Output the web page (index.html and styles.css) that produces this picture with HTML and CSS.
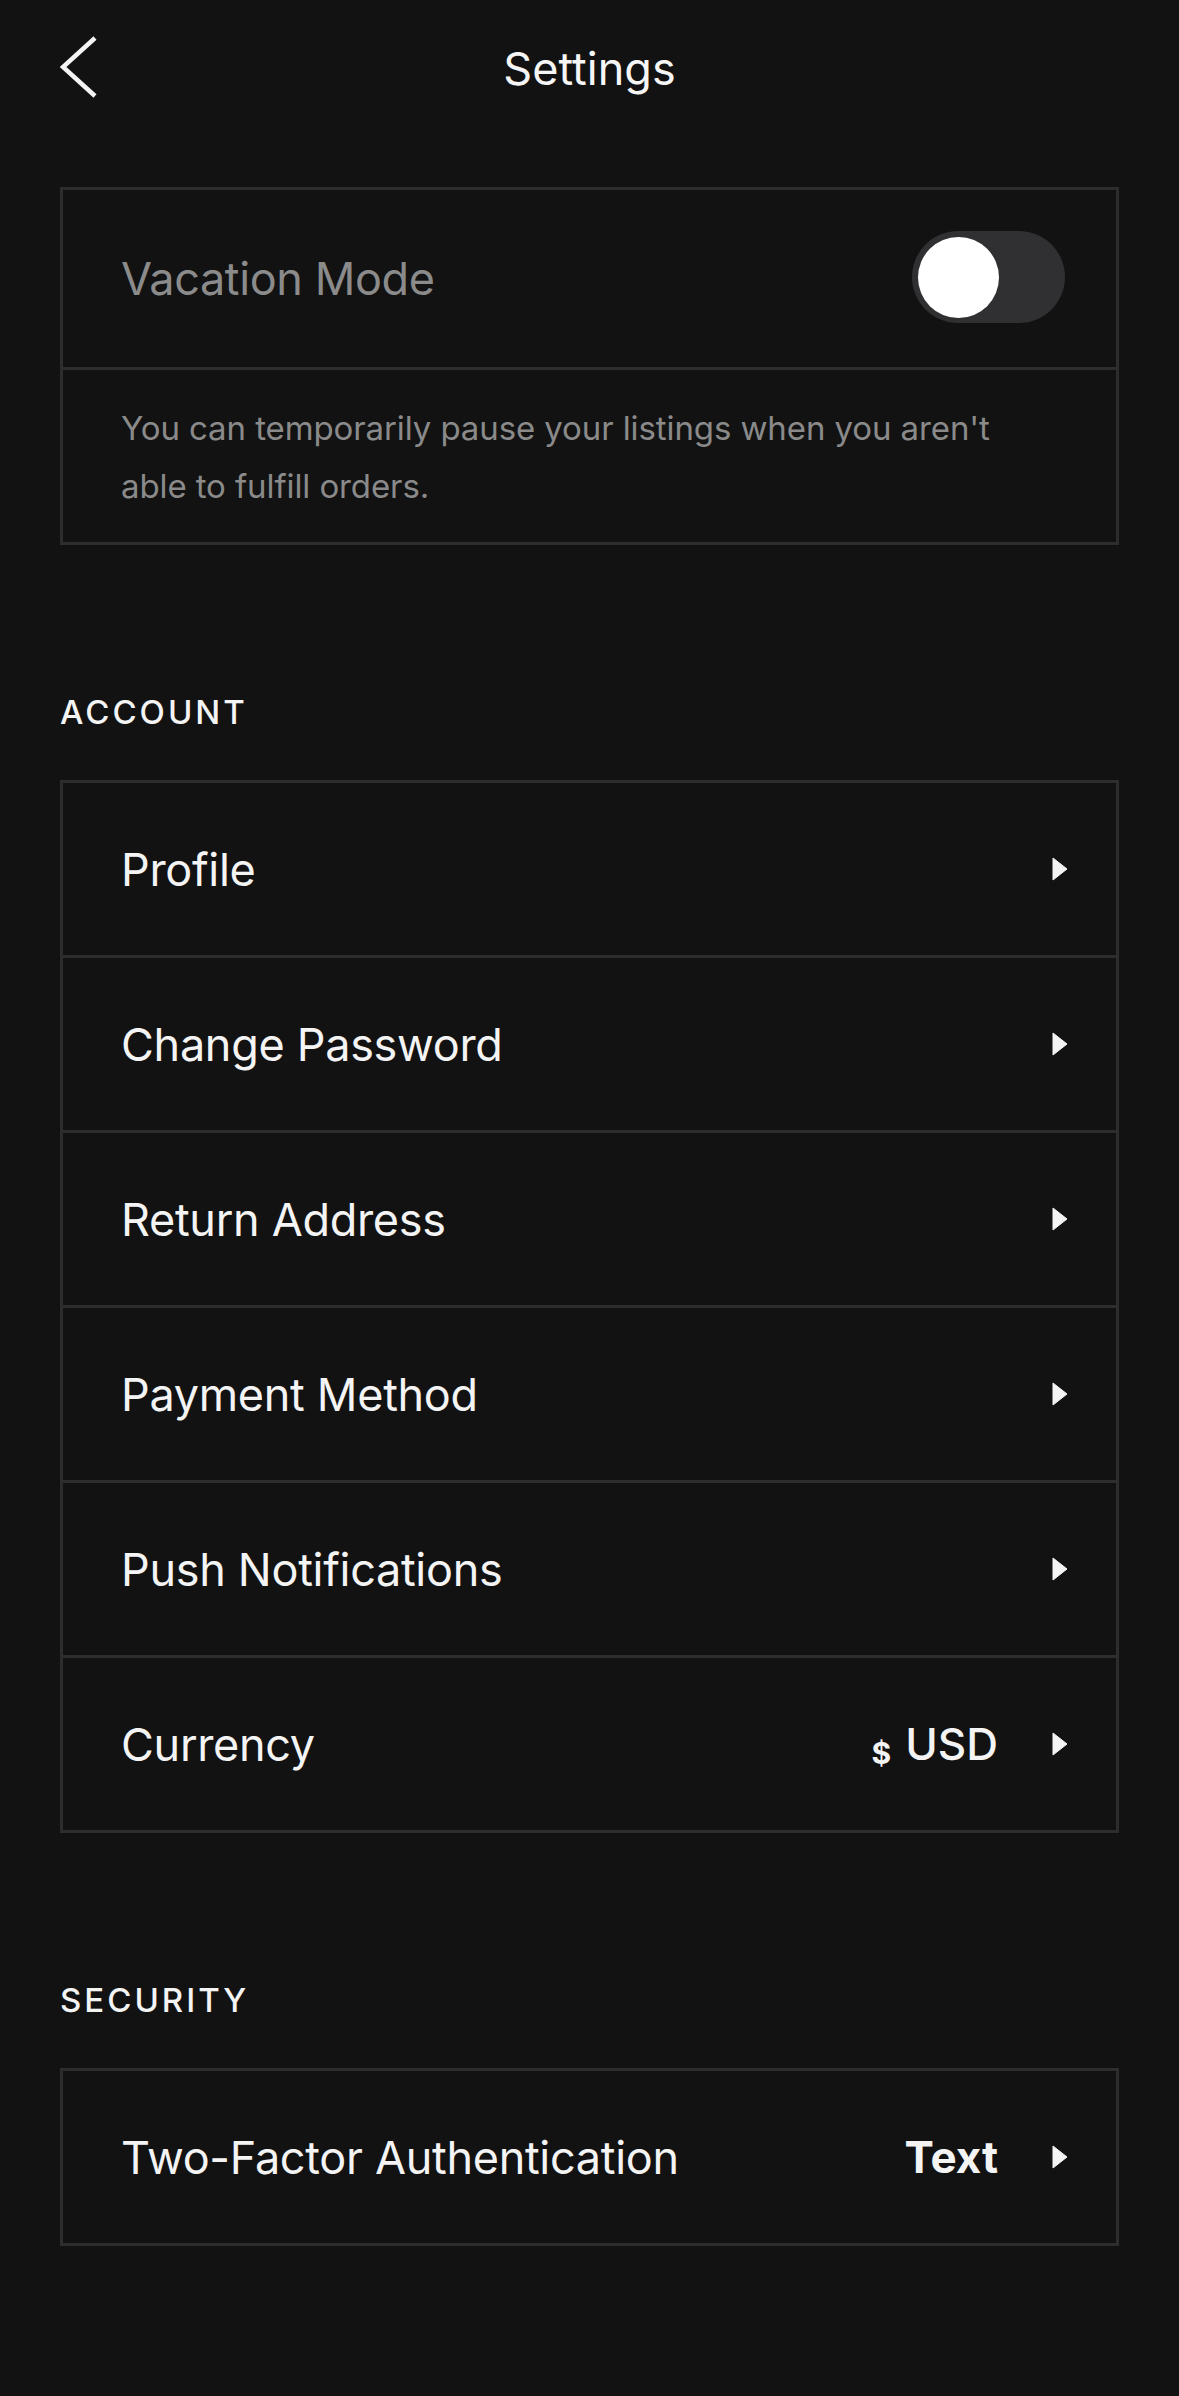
FILE: index.html
```html
<!DOCTYPE html>
<html lang="en">
<head>
<meta charset="utf-8">
<title>Settings</title>
<link rel="stylesheet" href="styles.css">
</head>
<body>
<header class="topbar">
  <div class="topbar-left">
    <svg class="back" width="40" height="64" viewBox="0 0 40 64" aria-hidden="true">
      <polyline points="35,3 3,32 35,61" fill="none" stroke="#f4f4f4" stroke-width="4.5"/>
    </svg>
  </div>
  <h1 class="title">Settings</h1>
  <div class="topbar-right"></div>
</header>

<main class="content">
  <section class="card">
    <div class="vacation-row">
      <span class="vacation-label">Vacation Mode</span>
      <span class="toggle"><span class="knob"></span></span>
    </div>
    <p class="vacation-desc">You can temporarily pause your listings when you aren't able to fulfill orders.</p>
  </section>

  <h2 class="section-title">ACCOUNT</h2>
  <section class="card list">
    <div class="row"><span class="row-label">Profile</span><span class="row-right"><svg class="caret" width="16" height="24" viewBox="0 0 16 24"><polygon points="1,1 15,12 1,23" fill="#f4f4f4" stroke="#f4f4f4" stroke-width="1" stroke-linejoin="round"/></svg></span></div>
    <div class="row"><span class="row-label">Change Password</span><span class="row-right"><svg class="caret" width="16" height="24" viewBox="0 0 16 24"><polygon points="1,1 15,12 1,23" fill="#f4f4f4" stroke="#f4f4f4" stroke-width="1" stroke-linejoin="round"/></svg></span></div>
    <div class="row"><span class="row-label">Return Address</span><span class="row-right"><svg class="caret" width="16" height="24" viewBox="0 0 16 24"><polygon points="1,1 15,12 1,23" fill="#f4f4f4" stroke="#f4f4f4" stroke-width="1" stroke-linejoin="round"/></svg></span></div>
    <div class="row"><span class="row-label">Payment Method</span><span class="row-right"><svg class="caret" width="16" height="24" viewBox="0 0 16 24"><polygon points="1,1 15,12 1,23" fill="#f4f4f4" stroke="#f4f4f4" stroke-width="1" stroke-linejoin="round"/></svg></span></div>
    <div class="row"><span class="row-label">Push Notifications</span><span class="row-right"><svg class="caret" width="16" height="24" viewBox="0 0 16 24"><polygon points="1,1 15,12 1,23" fill="#f4f4f4" stroke="#f4f4f4" stroke-width="1" stroke-linejoin="round"/></svg></span></div>
    <div class="row"><span class="row-label">Currency</span><span class="row-right"><span class="value"><span class="currency-sign">$</span>USD</span><svg class="caret" width="16" height="24" viewBox="0 0 16 24"><polygon points="1,1 15,12 1,23" fill="#f4f4f4" stroke="#f4f4f4" stroke-width="1" stroke-linejoin="round"/></svg></span></div>
  </section>

  <h2 class="section-title">SECURITY</h2>
  <section class="card list">
    <div class="row"><span class="row-label">Two-Factor Authentication</span><span class="row-right"><span class="value value-bold">Text</span><svg class="caret" width="16" height="24" viewBox="0 0 16 24"><polygon points="1,1 15,12 1,23" fill="#f4f4f4" stroke="#f4f4f4" stroke-width="1" stroke-linejoin="round"/></svg></span></div>
  </section>
</main>
</body>
</html>
```
FILE: styles.css
```css
html, body {
  margin: 0;
  padding: 0;
  background: #121212;
}

body {
  font-family: Inter, "Noto Sans", "Liberation Sans", sans-serif;
  color: #f4f4f4;
  min-height: 2396px;
}

.topbar {
  display: grid;
  grid-template-columns: 1fr auto 1fr;
  align-items: center;
  height: 138px;
  padding: 0 60px;
}

.topbar-left {
  display: flex;
  align-items: center;
}

.back {
  display: block;
  margin-top: -4px;
}

.title {
  margin: 0;
  font-size: 45px;
  font-weight: 400;
  line-height: 56px;
  color: #f6f6f6;
}

.content {
  padding: 0 60px;
  margin-top: 49px;
}

.card {
  border: 3px solid #2d2d2e;
  background: #121212;
}

.vacation-row {
  display: flex;
  align-items: center;
  justify-content: space-between;
  height: 177px;
  padding: 0 51px 0 58px;
  border-bottom: 3px solid #2d2d2e;
}

.vacation-label {
  font-size: 45px;
  letter-spacing: -0.4px;
  color: #8b8b8b;
}

.toggle {
  display: flex;
  align-items: center;
  width: 153px;
  height: 92px;
  border-radius: 46px;
  background: #303032;
  padding: 0 6px;
  box-sizing: border-box;
  margin-top: -3px;
}

.knob {
  width: 81px;
  height: 81px;
  border-radius: 50%;
  background: #ffffff;
}

.vacation-desc {
  margin: 0;
  padding: 29px 58px 27px;
  font-size: 33px;
  letter-spacing: -0.1px;
  line-height: 58px;
  color: #8a8a8a;
}

.section-title {
  margin: 147px 0 48px;
  font-size: 33px;
  line-height: 40px;
  font-weight: 500;
  letter-spacing: 3px;
  color: #f4f4f4;
}

.list .row + .row {
  border-top: 3px solid #2d2d2e;
}

.row {
  display: flex;
  align-items: center;
  justify-content: space-between;
  height: 172px;
  padding: 0 48px 0 58px;
}

.row-label {
  font-size: 45px;
  letter-spacing: -0.3px;
  color: #f4f4f4;
}

.row-right {
  display: flex;
  align-items: center;
  gap: 54px;
}

.caret {
  display: block;
}

.value {
  font-size: 44px;
  font-weight: 500;
  color: #f4f4f4;
  display: flex;
  align-items: baseline;
}

.value-bold {
  font-weight: 700;
}

.currency-sign {
  font-size: 30px;
  font-weight: 700;
  margin-right: 14px;
  position: relative;
  top: 4px;
}
```
